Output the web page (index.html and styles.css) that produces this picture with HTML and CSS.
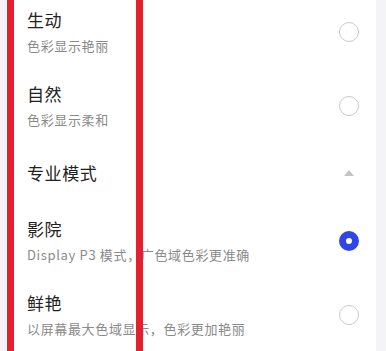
FILE: index.html
```html
<!DOCTYPE html>
<html lang="zh-CN">
<head>
<meta charset="utf-8">
<link rel="stylesheet" href="styles.css">
</head>
<body>
<div class="panel">
  <div class="item">
    <div class="text">
      <div class="title">生动</div>
      <div class="sub">色彩显示艳丽</div>
    </div>
    <span class="radio"></span>
  </div>
  <div class="item">
    <div class="text">
      <div class="title">自然</div>
      <div class="sub">色彩显示柔和</div>
    </div>
    <span class="radio"></span>
  </div>
  <div class="section">
    <div class="title">专业模式</div>
    <span class="caret"></span>
  </div>
  <div class="item">
    <div class="text">
      <div class="title">影院</div>
      <div class="sub">Display P3 模式，广色域色彩更准确</div>
    </div>
    <span class="radio checked"></span>
  </div>
  <div class="item">
    <div class="text">
      <div class="title">鲜艳</div>
      <div class="sub">以屏幕最大色域显示，色彩更加艳丽</div>
    </div>
    <span class="radio"></span>
  </div>
  <div class="highlight"></div>
</div>
</body>
</html>
```

FILE: styles.css
```css
html, body {
  margin: 0;
  padding: 0;
  background: #f4f4f6;
  overflow: hidden;
}
body {
  font-family: "Noto Sans CJK SC", "Noto Sans", sans-serif;
}
.panel {
  position: relative;
  margin: -6px 0 0 6px;
  width: 370px;
  height: 357px;
  overflow: hidden;
  background: #ffffff;
}
.item {
  display: flex;
  align-items: center;
  justify-content: space-between;
  padding: 14px 17px 13px 21px;
  height: 47px;
}
.text {
  display: flex;
  flex-direction: column;
  gap: 5px;
}
.title {
  font-size: 17px;
  line-height: 24px;
  color: #222222;
  letter-spacing: 0.6px;
}
.sub {
  font-size: 13px;
  line-height: 18px;
  color: #8a8a8a;
  letter-spacing: 0.65px;
  white-space: nowrap;
}
.section {
  display: flex;
  align-items: center;
  justify-content: space-between;
  height: 61px;
  padding: 0 22px 0 21px;
}
.caret {
  width: 0;
  height: 0;
  border-left: 5px solid transparent;
  border-right: 5px solid transparent;
  border-bottom: 6px solid #c4c4c4;
}
.radio {
  box-sizing: border-box;
  width: 20px;
  height: 20px;
  border-radius: 50%;
  border: 1px solid #c9c9c9;
  background: #fff;
  flex: none;
}
.radio.checked {
  border: 7px solid #2f46e4;
}
.highlight {
  position: absolute;
  left: 1px;
  top: -1px;
  width: 122px;
  height: 400px;
  border: 7px solid #e61f2c;
  pointer-events: none;
}
```
